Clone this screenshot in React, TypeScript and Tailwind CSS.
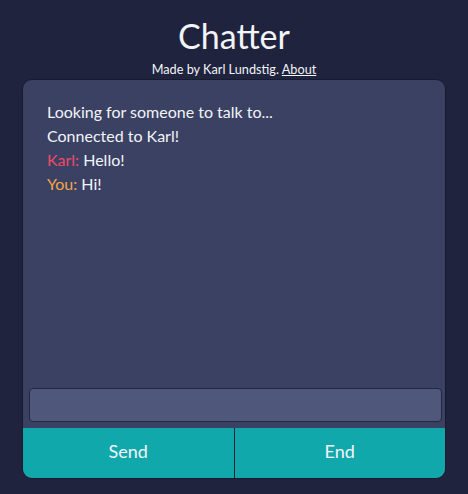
export default function App() {
  return (
    <div className="min-h-screen bg-[#1f233d] font-['Lato',sans-serif] text-[#f2f4f8]">
      <div className="flex flex-col items-center pt-[14px]">
        <h1 className="text-[34px] leading-[44px]">Chatter</h1>
        <p className="mt-[3px] text-[12.7px] leading-[16px]">
          Made by Karl Lundstig. <a className="underline">About</a>
        </p>
      </div>

      <div className="mx-auto mt-[2px] flex h-[400px] w-[424px] flex-col overflow-hidden rounded-[10px] border border-[#181b2e] bg-[#3a4163]">
        <div className="flex-1 px-[24px] pt-[20px] text-[16px] leading-[24px]">
          <div>Looking for someone to talk to...</div>
          <div>Connected to Karl!</div>
          <div>
            <span className="text-[#ef4a68]">Karl:</span> Hello!
          </div>
          <div>
            <span className="text-[#f5a54a]">You:</span> Hi!
          </div>
        </div>

        <div className="pb-[6px] pl-[6px] pr-[3px]">
          <input
            className="h-[34px] w-full rounded-[4px] border border-[#23273f] bg-[#4f587a] px-2 text-[16px] outline-none"
            type="text"
          />
        </div>

        <div className="flex h-[50px]">
          <button className="flex-1 bg-[#10a8ab] pb-[4px] text-[18px]">Send</button>
          <div className="w-px bg-[#1c2035]" />
          <button className="flex-1 bg-[#10a8ab] pb-[4px] text-[18px]">End</button>
        </div>
      </div>
    </div>
  );
}
